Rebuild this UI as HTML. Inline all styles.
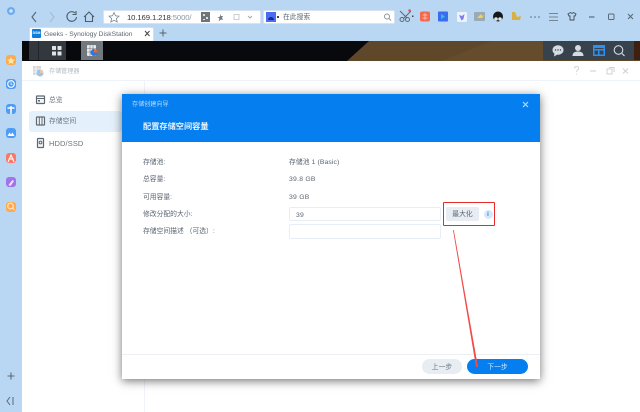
<!DOCTYPE html>
<html><head><meta charset="utf-8"><style>
html,body{margin:0;padding:0;width:640px;height:412px;overflow:hidden;background:#b9d7f3;font-family:"Liberation Sans","Noto Sans CJK SC",sans-serif}
#w{position:absolute;left:0;top:0;width:640px;height:412px;overflow:hidden;filter:blur(.3px)}
.a{position:absolute}
.t{position:absolute;white-space:nowrap;line-height:12px;margin-top:1px}
.side{position:absolute;left:6px;width:10px;height:10px;border-radius:3px}
.lbl{font-size:6.800px;color:#5a6570}
</style></head><body><div id="w">
<!-- toolbar -->
<div class="a" style="left:103px;top:10px;width:156px;height:12px;background:#fff;border:1px solid #d7e4f0;border-radius:2px"></div>
<div class="a" style="left:263px;top:10px;width:130px;height:12px;background:#fff;border:1px solid #d7e4f0;border-radius:2px"></div>
<svg class="a" style="left:0;top:0" width="640" height="41" fill="none">
<circle cx="11" cy="11" r="4" fill="#5aa5ee" opacity=".85"/><circle cx="11" cy="11" r="1.800" fill="#cfe5f8"/>
<path d="M36 12l-4 5 4 5" stroke="#5b6b78" stroke-width="1.200"/>
<path d="M50 12l4 5-4 5" stroke="#a9bccd" stroke-width="1.200"/>
<path d="M75 13a4.800 4.800 0 1 0 1.500 4M76 11v3.500h-3.500" stroke="#4d5c68" stroke-width="1.100"/>
<path d="M84 17l5-5 5 5M85.500 16v5.500h7V16" stroke="#4d5c68" stroke-width="1.100"/>
<path d="M400 11l7 7M411 11l-7 7" stroke="#5a6a78" stroke-width="1"/><circle cx="402" cy="19.500" r="2" stroke="#5a6a78"/><circle cx="407.500" cy="19.500" r="2" stroke="#5a6a78"/>
<circle cx="409.500" cy="10.500" r="1.200" fill="#e8434e"/><rect x="412" y="15.500" width="1.500" height="1.500" fill="#445"/>
<rect x="420" y="11.500" width="10" height="10" rx="2" fill="#f2694d"/><path d="M425 13v7M422.500 15h5M422.500 18h5" stroke="#fbc9b8" stroke-width=".8"/>
<rect x="438" y="11.500" width="10" height="10" rx="1" fill="#3a6cf0"/><path d="M441 14l4 2.500-4 2.500z" fill="#30c0f0"/>
<rect x="457" y="12" width="10" height="10" rx="1" fill="#eef2fb"/><path d="M459 15l3 1 2.500-2-1 5-2 1.500z" fill="#7b7ff0"/>
<rect x="474" y="12" width="11" height="9" rx="1" fill="#9aa9b4"/><path d="M477 18l4-4 1 2 2-1-2 3z" fill="#edd55c"/>
<circle cx="498" cy="16.500" r="5" fill="#15181c"/><circle cx="496" cy="19" r="1.800" fill="#dfe6ec"/><circle cx="500" cy="19" r="1.800" fill="#dfe6ec"/>
<path d="M512 12h3l2 5 4-1-1 4h-8z" fill="#d8b044"/>
<circle cx="531" cy="17" r=".8" fill="#5a6a78"/><circle cx="535" cy="17" r=".8" fill="#5a6a78"/><circle cx="539" cy="17" r=".8" fill="#5a6a78"/>
<path d="M549 13.500h9M549 17h9M549 20.500h9" stroke="#768592" stroke-width="1.100"/>
<path d="M568 14l2.500-1.500 1.500 1 1.500-1 2.500 1.500-1 2h-1v4h-4v-4h-1z" stroke="#3f4d58" stroke-width=".9"/>
<path d="M589 17h5.500" stroke="#5a6a78" stroke-width="1.200"/>
<rect x="608.500" y="14" width="5.500" height="5.500" rx="1" stroke="#5a6a78"/>
<path d="M628 14l5 5M633 14l-5 5" stroke="#5a6a78" stroke-width="1.100"/>
<circle cx="387" cy="16.500" r="2.500" stroke="#8b959d"/><path d="M389 18.500l2 2" stroke="#8b959d"/>
</svg>
<svg class="a" style="left:108px;top:11px" width="150" height="13" fill="none">
<path d="M6 1.500l1.500 3.300 3.500.4-2.600 2.300.8 3.500L6 9.300 2.800 11l.8-3.500L1 5.200l3.500-.4z" stroke="#7a8894" stroke-width=".8"/>
<rect x="93" y="1" width="9" height="10" fill="#6f7478"/><rect x="95" y="3" width="2" height="2" fill="#ddd"/><rect x="98" y="6" width="2" height="2" fill="#ddd"/><rect x="95" y="8" width="2" height="1" fill="#ddd"/>
<path d="M113 3l-1.500 3h-2l2 1.500-1 3 2.500-2 2 .5-1-2.500 1-1.500h-2z" fill="#6f7b85"/>
<rect x="126" y="3.500" width="5" height="5" stroke="#b9c2ca" stroke-width=".8"/>
<path d="M140 5l2 2 2-2" stroke="#a2acb5"/>
</svg>
<div class="t" style="left:127px;top:11px;font-size:7.700px;color:#333;letter-spacing:-.1px">10.169.1.218<span style="color:#8e98a2">:5000/</span></div>
<div class="a" style="left:266px;top:12px;width:10px;height:10px;background:#4a6bf2"></div>
<div class="a" style="left:268px;top:17px;width:6px;height:3px;background:#102a90;border-radius:3px 3px 0 0"></div>
<div class="a" style="left:277px;top:16px;width:2px;height:2px;background:#445"></div>
<div class="t" style="left:283px;top:11px;font-size:6.800px;color:#5e6870">在此搜索</div>
<!-- tab -->
<div class="a" style="left:29px;top:27px;width:123px;height:14px;background:#fff;border:1px solid #d3e0ec;border-bottom:0;border-radius:2px 2px 0 0"></div>
<div class="a" style="left:32px;top:29px;width:9px;height:9px;background:#0b7fe0;border-radius:1px"></div>
<div class="t" style="left:32px;top:29px;width:9px;text-align:center;font-size:3.500px;line-height:7px;font-weight:bold;color:#fff">DSM</div>
<div class="t" style="left:44px;top:28px;font-size:6.700px;color:#5d6770">Geeks - Synology DiskStation</div>
<svg class="a" style="left:143px;top:29px" width="9" height="9" fill="none"><path d="M2 2l4.500 5M6.500 2L2 7" stroke="#444" stroke-width="1"/></svg>
<svg class="a" style="left:158px;top:28px" width="10" height="10" fill="none"><path d="M5 1.500v7M1.500 5h7" stroke="#55636f" stroke-width="1"/></svg>
<!-- side bar -->
<div class="side" style="top:55px;background:#ffa94d"></div>
<div class="side" style="top:79px;background:#4f9cf5"></div>
<div class="side" style="top:104px;background:#4f9cf5"></div>
<div class="side" style="top:128px;background:#4f9cf5"></div>
<div class="side" style="top:153px;background:#f8796a"></div>
<div class="side" style="top:177px;background:#a274ec"></div>
<div class="side" style="top:202px;background:#ffa94d"></div>
<svg class="a" style="left:0;top:50px" width="22" height="362" fill="none">
<path d="M11 7l1.200 2.500 2.600.3-1.900 1.800.5 2.500L11 12.800 8.600 14l.5-2.500-1.900-1.800 2.600-.3z" fill="#ffe9a8"/>
<circle cx="11" cy="34" r="3.300" stroke="#fff" stroke-width="1.100"/><path d="M11 32v2.300h1.500" stroke="#fff" stroke-width=".7"/>
<path d="M7.500 58h7M11 56v8" stroke="#fff" stroke-width="1.500"/>
<path d="M7.500 86l2-3.500 1.500 2 1.500-2 2 3.500z" fill="#fff"/>
<path d="M8 112l3-7 3 7M8.500 109h5" stroke="#fff" stroke-width="1"/>
<path d="M8.500 135l4-5 1.500 1-3.500 5z" fill="#f2e6ff"/>
<circle cx="10.500" cy="156" r="2.800" stroke="#ffe9c8" stroke-width="1.100"/><path d="M12.500 158l2 2" stroke="#ffe9c8"/>
<path d="M11 322.500v7M7.500 326h7" stroke="#5a6a78" stroke-width="1.100"/>
<path d="M10 347l-3 4 3 4M13 347v8" stroke="#5a6a78" stroke-width="1"/>
</svg>
<!-- desktop band -->
<div class="a" style="left:22px;top:41px;width:618px;height:20px;background:#07090d"></div>
<svg class="a" style="left:22px;top:41px" width="618" height="20"><polygon points="325,20 347,0 618,0 618,20" fill="#5f482a"/><polygon points="420,20 470,0 521,0 521,20" fill="#644c2d"/></svg>
<div class="a" style="left:543px;top:41px;width:91px;height:19px;background:#38424d"></div>
<div class="a" style="left:634px;top:41px;width:6px;height:19px;background:#3e2010"></div>
<div class="a" style="left:29px;top:41px;width:37px;height:19px;background:#33383e"></div>
<div class="a" style="left:38px;top:41px;width:1px;height:19px;background:#22262b"></div>
<div class="a" style="left:81px;top:41px;width:22px;height:19px;background:#71787e"></div>
<svg class="a" style="left:22px;top:41px" width="618" height="20" fill="none">
<rect x="30" y="5" width="4" height="4" rx=".5" fill="#dfe3e6"/><rect x="30" y="10.500" width="4" height="4" rx=".5" fill="#dfe3e6"/><rect x="35.500" y="5" width="4" height="4" rx=".5" fill="#dfe3e6"/><rect x="35.500" y="10.500" width="4" height="4" rx=".5" fill="#dfe3e6"/>
<rect x="65" y="4" width="9" height="11" rx="1" fill="#e9ecee"/><path d="M65 7.500h9M65 11h9M68 4v11M71 4v11" stroke="#71787e" stroke-width=".6"/>
<circle cx="72" cy="11.500" r="3.500" fill="#2a78e8"/><path d="M72 8a3.500 3.500 0 0 1 3.500 3.500H72z" fill="#ee6a2a"/>
<ellipse cx="536" cy="9" rx="5.500" ry="4.800" fill="#d5dbe0"/><path d="M532.500 12l-.5 3.500 3.500-2z" fill="#d5dbe0"/>
<circle cx="533.500" cy="9" r=".7" fill="#38424d"/><circle cx="536" cy="9" r=".7" fill="#38424d"/><circle cx="538.500" cy="9" r=".7" fill="#38424d"/>
<circle cx="556" cy="7" r="3" fill="#d5dbe0"/><path d="M550.500 15c0-3.500 2.500-4.500 5.500-4.500s5.500 1 5.500 4.500z" fill="#d5dbe0"/>
<rect x="571" y="4" width="12" height="11" fill="#2d8ff0"/><path d="M572.500 7.500h9" stroke="#38424d" stroke-width="1"/><rect x="572.500" y="9.500" width="3.500" height="4" fill="#38424d"/><rect x="577.500" y="9.500" width="4" height="4" fill="#38424d"/>
<circle cx="596.500" cy="9" r="4.300" stroke="#d5dbe0" stroke-width="1.100"/><path d="M600 12.500l2.500 2.500" stroke="#d5dbe0" stroke-width="1.200"/>
</svg>
<!-- app window -->
<div class="a" style="left:22px;top:61px;width:618px;height:351px;background:#fff"></div>
<div class="a" style="left:22px;top:80px;width:618px;height:1px;background:#edf3f9"></div>
<div class="a" style="left:144px;top:81px;width:1px;height:331px;background:#f0f3f9"></div>
<svg class="a" style="left:32px;top:64px" width="14" height="14" fill="none"><rect x="1" y="2" width="8" height="9" fill="#d5d9dc"/><path d="M1 5h8M1 8h8M4 2v9" stroke="#fff" stroke-width=".6"/><circle cx="8" cy="9" r="3.500" fill="#9dc4ea"/><path d="M8 5.500A3.500 3.500 0 0 1 11.500 9H8z" fill="#e9c9a8"/></svg>
<div class="t" style="left:49px;top:65px;font-size:6.100px;color:#b2b9c0">存储管理器</div>
<svg class="a" style="left:570px;top:64px" width="66" height="14" fill="none">
<path d="M.5 4.500a2 2 0 1 1 3 1.700c-.6.400-1 .8-1 1.800M2.500 9.500v1" stroke="#ccd2d8" stroke-width=".9" transform="translate(4 0)"/>
<path d="M20 7h6" stroke="#ccd2d8" stroke-width="1.100"/>
<rect x="37" y="5" width="5" height="5" stroke="#ccd2d8"/><path d="M39 3.500h5v4.500" stroke="#ccd2d8"/>
<path d="M53 4.500l5 5M58 4.500l-5 5" stroke="#ccd2d8" stroke-width="1"/>
</svg>
<!-- nav -->
<div class="a" style="left:29px;top:111px;width:93px;height:21px;background:#e4f0fb;border-radius:3px"></div>
<svg class="a" style="left:35px;top:95px" width="12" height="56" fill="none">
<rect x="1.500" y="1" width="8" height="7.500" rx=".5" fill="#f4f6f8" stroke="#5e6870" stroke-width="1.200"/><path d="M2 3.500h7" stroke="#5e6870"/><rect x="3" y="5" width="2" height="1.500" fill="#5e6870"/>
<rect x="1.500" y="22" width="8" height="8" rx=".5" fill="#f4f6f8" stroke="#5e6870" stroke-width="1.200"/><path d="M4.300 22v8M7 22v8" stroke="#5e6870"/>
<rect x="2.500" y="43.500" width="6" height="9" rx=".5" fill="#f4f6f8" stroke="#5e6870" stroke-width="1.200"/><circle cx="5.500" cy="47.500" r="1.400" stroke="#5e6870"/>
</svg>
<div class="t lbl" style="left:49px;top:94px;color:#6a747d">总览</div>
<div class="t lbl" style="left:49px;top:115px;color:#6a747d">存储空间</div>
<div class="t" style="left:49px;top:136.500px;font-size:7.500px;color:#6a747d;letter-spacing:.1px">HDD/SSD</div>
<!-- dialog -->
<div class="a" style="left:122px;top:94px;width:418px;height:285px;background:#fff;box-shadow:0 2px 9px rgba(0,0,0,.55)"></div>
<div class="a" style="left:122px;top:94px;width:418px;height:48px;background:#057ff0"></div>
<div class="t" style="left:132px;top:98px;font-size:6.100px;color:#b9dcfb">存储创建向导</div>
<div class="t" style="left:143px;top:120px;font-size:8.200px;font-weight:bold;color:#e6f3fe">配置存储空间容量</div>
<svg class="a" style="left:521px;top:100px" width="9" height="9" fill="none"><path d="M2 2l5 5M7 2L2 7" stroke="#b5dcfb" stroke-width="1.200"/></svg>
<div class="t lbl" style="left:143px;top:156px">存储池:</div>
<div class="t lbl" style="left:143px;top:173px">总容量:</div>
<div class="t lbl" style="left:143px;top:191px">可用容量:</div>
<div class="t lbl" style="left:143px;top:208px">修改分配的大小:</div>
<div class="t lbl" style="left:143px;top:225px">存储空间描述 （可选）:</div>
<div class="t lbl" style="left:289px;top:156px;letter-spacing:.1px">存储池 1 (Basic)</div>
<div class="t lbl" style="left:289px;top:173px;letter-spacing:.25px">39.8 GB</div>
<div class="t lbl" style="left:289px;top:191px;letter-spacing:.25px">39 GB</div>
<div class="a" style="left:289px;top:207px;width:150px;height:12px;border:1px solid #e8eef5;border-radius:2px;background:#fff"></div>
<div class="t lbl" style="left:296px;top:208.500px;letter-spacing:.25px">39</div>
<div class="a" style="left:289px;top:224px;width:150px;height:13px;border:1px solid #e8eef5;border-radius:2px;background:#fff"></div>
<div class="a" style="left:446px;top:207px;width:33px;height:14px;background:#e8edf3;border-radius:2px"></div>
<div class="t" style="left:446px;top:207.500px;width:33px;text-align:center;font-size:6.800px;color:#5a646e">最大化</div>
<div class="a" style="left:483.500px;top:209.500px;width:9px;height:9px;background:#d4e8fb;border-radius:50%"></div>
<div class="t" style="left:483.500px;top:207.500px;width:9px;text-align:center;font-size:6px;font-weight:bold;color:#1b7fdb">i</div>
<div class="a" style="left:443px;top:202px;width:50px;height:22px;border:1.700px solid #e82a28;border-radius:1px"></div>
<div class="a" style="left:122px;top:354px;width:418px;height:1px;background:#ecf0f4"></div>
<div class="a" style="left:422px;top:359px;width:40px;height:15px;background:#e8edf3;border-radius:8px"></div>
<div class="t" style="left:422px;top:360.500px;width:40px;text-align:center;font-size:6.800px;color:#6a747d">上一步</div>
<div class="a" style="left:467px;top:359px;width:61px;height:15px;background:#057ff0;border-radius:8px"></div>
<div class="t" style="left:467px;top:360.500px;width:61px;text-align:center;font-size:6.800px;color:#cfe6fb">下一步</div>
<!-- arrow -->
<svg class="a" style="left:0;top:0" width="640" height="412">
<polygon points="453,230 453.800,230 478,367 476,367" fill="#f24a4a"/>
</svg>
</div></body></html>
